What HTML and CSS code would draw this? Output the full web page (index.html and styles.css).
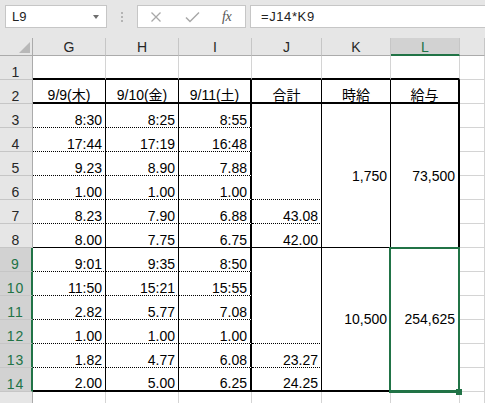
FILE: index.html
```html
<!DOCTYPE html>
<html lang="ja">
<head>
<meta charset="utf-8">
<title>Sheet</title>
<link rel="stylesheet" href="styles.css">
</head>
<body>
<div class="topbar">
  <div class="namebox"><span>L9</span><span class="arrow"></span></div>
  <div class="sep"><i></i><i></i><i></i></div>
  <div class="fbtns">
    <svg class="ic-x" width="12" height="12" viewBox="0 0 12 12"><path d="M1.5 1.5 L10.5 10.5 M10.5 1.5 L1.5 10.5" stroke="#a8a8a8" stroke-width="1.3" fill="none"/></svg>
    <svg class="ic-v" width="15" height="12" viewBox="0 0 15 12"><path d="M1 6.5 L5 10.5 L14 1.5" stroke="#a8a8a8" stroke-width="1.5" fill="none"/></svg>
    <span class="fx">fx</span>
  </div>
  <div class="formula">=J14*K9</div>
</div>
<div class="sheet">
  <div class="ch corner"><svg width="11" height="11" viewBox="0 0 11 11"><polygon points="11,0 11,11 0,11" fill="#b8b8b8"/></svg></div>
  <div class="ch">G</div><div class="ch">H</div><div class="ch">I</div><div class="ch">J</div><div class="ch">K</div><div class="ch sel">L</div><div class="ch"></div>

  <div class="rh">1</div>
  <div class="c bt"></div><div class="c bt"></div><div class="c bt"></div><div class="c bt"></div><div class="c bt"></div><div class="c bt"></div><div class="c"></div>

  <div class="rh">2</div>
  <div class="c ctr rs bt">9/9(木)</div><div class="c ctr rs bt">9/10(金)</div><div class="c ctr rt bt">9/11(土)</div><div class="c ctr rs bt">合計</div><div class="c ctr rs bt">時給</div><div class="c ctr rt bt">給与</div><div class="c"></div>

  <div class="rh">3</div>
  <div class="c rs bd">8:30</div><div class="c rs bd">8:25</div><div class="c rt bd">8:55</div>
  <div class="c rs bd span4"></div><div class="c rs bs span6 mid">1,750</div><div class="c rt bs span6 mid">73,500</div><div class="c"></div>

  <div class="rh">4</div>
  <div class="c rs bd">17:44</div><div class="c rs bd">17:19</div><div class="c rt bd">16:48</div><div class="c"></div>

  <div class="rh">5</div>
  <div class="c rs bd">9.23</div><div class="c rs bd">8.90</div><div class="c rt bd">7.88</div><div class="c"></div>

  <div class="rh">6</div>
  <div class="c rs bd">1.00</div><div class="c rs bd">1.00</div><div class="c rt bd">1.00</div><div class="c"></div>

  <div class="rh">7</div>
  <div class="c rs bd">8.23</div><div class="c rs bd">7.90</div><div class="c rt bd">6.88</div><div class="c rs bd">43.08</div><div class="c"></div>

  <div class="rh">8</div>
  <div class="c rs bs">8.00</div><div class="c rs bs">7.75</div><div class="c rt bs">6.75</div><div class="c rs bs">42.00</div><div class="c"></div>

  <div class="rh sel">9</div>
  <div class="c rs bd">9:01</div><div class="c rs bd">9:35</div><div class="c rt bd">8:50</div>
  <div class="c rs bd span4"></div><div class="c rs bt span6 mid">10,500</div><div class="c lsel span6 mid">254,625</div><div class="c"></div>

  <div class="rh sel">10</div>
  <div class="c rs bd">11:50</div><div class="c rs bd">15:21</div><div class="c rt bd">15:55</div><div class="c"></div>

  <div class="rh sel">11</div>
  <div class="c rs bd">2.82</div><div class="c rs bd">5.77</div><div class="c rt bd">7.08</div><div class="c"></div>

  <div class="rh sel">12</div>
  <div class="c rs bd">1.00</div><div class="c rs bd">1.00</div><div class="c rt bd">1.00</div><div class="c"></div>

  <div class="rh sel">13</div>
  <div class="c rs bd">1.82</div><div class="c rs bd">4.77</div><div class="c rt bd">6.08</div><div class="c rs bd">23.27</div><div class="c"></div>

  <div class="rh sel">14</div>
  <div class="c rs bt">2.00</div><div class="c rs bt">5.00</div><div class="c rt bt">6.25</div><div class="c rs bt">24.25</div><div class="c"></div>

  <div class="rh"></div>
  <div class="c"></div><div class="c"></div><div class="c"></div><div class="c"></div><div class="c"></div><div class="c"></div><div class="c"></div>

  <div class="selbox"></div>
  <div class="handle"></div>
</div>
</body>
</html>
```
FILE: styles.css
```css
html, body {
  margin: 0;
  padding: 0;
}
body {
  width: 485px;
  height: 403px;
  overflow: hidden;
  background: #ffffff;
  font-family: "Liberation Sans", "Noto Sans CJK JP", sans-serif;
  color: #000;
}

/* ---------- formula bar ---------- */
.topbar {
  height: 38px;
  box-sizing: border-box;
  padding-top: 5px;
  background: #e6e6e6;
  display: flex;
  align-items: flex-start;
}
.namebox {
  margin-left: 5px;
  width: 102px;
  height: 23px;
  box-sizing: border-box;
  background: #fff;
  border: 1px solid #c6c6c6;
  display: flex;
  align-items: center;
  justify-content: space-between;
  padding: 0 7px 0 6px;
  font-size: 13px;
  color: #222;
}
.arrow {
  width: 0;
  height: 0;
  border-left: 3.5px solid transparent;
  border-right: 3.5px solid transparent;
  border-top: 4px solid #6e6e6e;
  margin-top: 1px;
}
.sep {
  width: 30px;
  height: 23px;
  display: flex;
  flex-direction: column;
  align-items: center;
  justify-content: center;
  gap: 2px;
}
.sep i {
  display: block;
  width: 2px;
  height: 2px;
  background: #b4b4b4;
}
.fbtns {
  width: 109px;
  height: 23px;
  box-sizing: border-box;
  background: #fff;
  border: 1px solid #c6c6c6;
  display: flex;
  align-items: center;
  padding-left: 12px;
}
.ic-v {
  margin-left: 23px;
}
.fx {
  margin-left: 22px;
  font-family: "Liberation Serif", serif;
  font-style: italic;
  font-size: 14px;
  color: #555;
  letter-spacing: -0.5px;
}
.formula {
  margin-left: 4px;
  flex: 1;
  height: 23px;
  box-sizing: border-box;
  background: #fff;
  border: 1px solid #c6c6c6;
  border-right: none;
  padding-left: 10px;
  font-size: 13px;
  line-height: 21px;
  letter-spacing: 0.6px;
  color: #222;
}

/* ---------- sheet grid ---------- */
.sheet {
  position: relative;
  display: grid;
  grid-template-columns: 33px 73px 73px 73px 70px 69px 69px 25px;
  grid-template-rows: 18px repeat(15, 24px);
  font-size: 14px;
  line-height: 14px;
}
.sheet > div {
  box-sizing: border-box;
  min-width: 0;
  white-space: nowrap;
}
.ch {
  background: #e6e6e6;
  border-right: 1px solid #c6c6c6;
  border-bottom: 1px solid #ababab;
  display: flex;
  align-items: center;
  justify-content: center;
  color: #262626;
  padding-top: 1px;
}
.ch.corner {
  justify-content: flex-end;
  align-items: flex-end;
  padding: 0 2px 2px 0;
  border-right: 1px solid #ababab;
}
.ch.corner svg {
  display: block;
}
.ch.sel {
  background: #d2d2d2;
  border-bottom: 2px solid #217346;
  color: #217346;
}
.rh {
  background: #e6e6e6;
  border-right: 1px solid #ababab;
  border-bottom: 1px solid #c6c6c6;
  display: flex;
  align-items: flex-end;
  justify-content: center;
  color: #262626;
  letter-spacing: 1px;
}
.rh.sel {
  background: #d2d2d2;
  color: #217346;
  border-right: 2px solid #217346;
}

.c {
  border-right: 1px solid #d4d4d4;
  border-bottom: 1px solid #d4d4d4;
  display: flex;
  align-items: flex-end;
  justify-content: flex-end;
  padding-right: 3px;
}
.ctr {
  justify-content: center;
  padding-right: 0;
}
.mid {
  align-items: center;
}
.rs { border-right: 1px solid #000; }
.rt { border-right: 2px solid #000; }
.bd { border-bottom: 1px dotted #000; }
.bs { border-bottom: 1px solid #000; }
.bt { border-bottom: 2px solid #000; }
.span4 { grid-row: span 4; }
.span6 { grid-row: span 6; }
.lsel {
  border-right: 2px solid #217346;
  border-bottom: 2px solid #217346;
  padding-right: 3px;
}

/* selection overlay */
.selbox {
  position: absolute;
  left: 389px;
  top: 209px;
  width: 71px;
  height: 146px;
  border: 2px solid #217346;
  pointer-events: none;
}
.handle {
  position: absolute;
  left: 456px;
  top: 351px;
  width: 6px;
  height: 6px;
  background: #217346;
}
```
